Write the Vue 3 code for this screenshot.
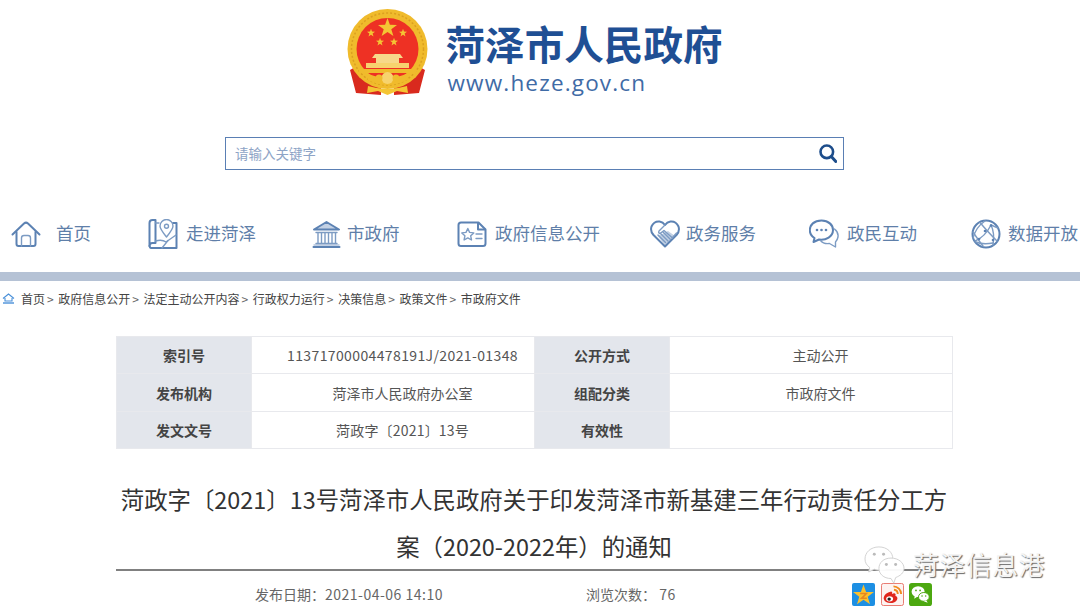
<script setup>
// five pointed star as a polygon point list
const star = (cx, cy, r) => {
  const pts = []
  for (let i = 0; i < 10; i++) {
    const rad = i % 2 ? r * 0.4 : r
    const a = -Math.PI / 2 + (i * Math.PI) / 5
    pts.push((cx + rad * Math.cos(a)).toFixed(1) + ',' + (cy + rad * Math.sin(a)).toFixed(1))
  }
  return pts.join(' ')
}

const smallStars = [[24, 25], [56, 25], [33, 34], [47, 34]]

const navs = [
  {
    name: '首页', gap: 15,
    lines: ['M1.5 15.5 L13 4.5 Q15 2.8 17 4.5 L28.5 15.5', 'M5.5 13 V25 Q5.5 27 7.5 27 H22.5 Q24.5 27 24.5 25 V13'],
    thin: ['M10.5 27 V19 Q10.5 16.5 13 16.5 H17 Q19.5 16.5 19.5 19 V27']
  },
  {
    name: '走进菏泽', gap: 8,
    lines: ['M1.5 4 Q1.5 1 4.5 1 H7.5 V24 H4.5 Q1.5 24 1.5 27 Z', 'M1.5 27 Q2 29.5 4.5 29 H28.5 V4 H25'],
    thin: ['M7.5 4 H11', 'M18.5 18 Q12 10 12 7 A6.5 6.5 0 0 1 25 7 Q25 10 18.5 18 Z', 'M18.5 9.2 A2 2 0 1 0 18.5 5.2 A2 2 0 1 0 18.5 9.2', 'M7.5 22 Q14 20 18 23 L28 16', 'M14 29 L20 21.5']
  },
  {
    name: '市政府', gap: 5,
    fills: ['M2 10.5 L14.5 3 L27 10.5 Z', 'M1.5 25 H27.5 V28.5 H1.5 Z'],
    lines: ['M2 10.5 L14.5 3 L27 10.5 Z', 'M1.5 28 H27.5'],
    thin: ['M4 13.5 H25', 'M4 24.5 H25', 'M6 14 V24', 'M9.5 14 V24', 'M13 14 V24', 'M16.5 14 V24', 'M20 14 V24', 'M23.5 14 V24']
  },
  {
    name: '政府信息公开', gap: 8,
    lines: ['M1.5 6 Q1.5 3.5 4 3.5 H21.5 L28.5 10.5 V24.5 Q28.5 27 26 27 H4 Q1.5 27 1.5 24.5 Z', 'M21 4 V10.5 H28'],
    thin: ['M10.8 9.5 L12.6 13.4 L16.8 13.9 L13.7 16.8 L14.5 21 L10.8 18.9 L7.1 21 L7.9 16.8 L4.8 13.9 L9 13.4 Z', 'M19 15 H25', 'M19 19.5 H25']
  },
  {
    name: '政务服务', gap: 6,
    fills: ['M8 17 L15 27 L25 17 L18 12 Z'],
    lines: ['M15 27.5 L3.5 16 Q0 12 1.5 7.5 Q4 2 9.5 2.5 Q13 3 15 6 Q17 3 20.5 2.5 Q26 2 28.5 7.5 Q30 12 26.5 16 Z'],
    thin: ['M15 6 L9 12 Q8 14 10 14.5 L14 11.5 L22.5 19', 'M8 16 L15.5 23.5', 'M10.5 14.5 L18 22', 'M13 13 L20.5 20.5', 'M22.5 18.5 L26.5 14']
  },
  {
    name: '政民互动', gap: 8,
    lines: ['M12.5 1.5 C5 1.5 .8 6 .8 11 C.8 14.5 3 17.5 5.5 19 L4.5 23 L10 20.5 C17 21.5 24 17.5 24 11 C24 6 19.5 1.5 12.5 1.5 Z'],
    thin: ['M25.5 10 C28 12 29.5 15 29 18 C28.5 20.5 27.5 22 26.5 23 L26.5 28 L20.5 24.5 C17 25 13.5 24 11.5 21.5'],
    dots: [[8, 11], [12.5, 11], [17, 11]]
  },
  {
    name: '数据开放', gap: 7,
    lines: ['M15 1.5 A13.5 13.5 0 1 0 15 28.5 A13.5 13.5 0 1 0 15 1.5'],
    thin: ['M2 19 Q5 8 14 2', 'M9 3.5 Q16 12 26 22', 'M4 22 Q14 18 20 6 L27 9', 'M20 6 Q24 14 22 26', 'M5 23 Q12 26 22 24', 'M2 13 Q8 22 12 27'],
    dots: [[14, 12], [20, 6.5], [8, 20], [22, 21]]
  }
]

const crumbs = ['首页', '政府信息公开', '法定主动公开内容', '行政权力运行', '决策信息', '政策文件', '市政府文件']

const rows = [
  ['索引号', '11371700004478191J/2021-01348', '公开方式', '主动公开'],
  ['发布机构', '菏泽市人民政府办公室', '组配分类', '市政府文件'],
  ['发文文号', '菏政字〔2021〕13号', '有效性', '']
]
</script>

<template>
  <div class="page">
    <header class="brand">
      <svg class="emblem" width="82" height="88" viewBox="0 0 82 88">
        <path d="M10 58 L3 62 L9 85 L34 87 V70 Z M71 58 L78 62 L72 85 L47 87 V70 Z" fill="#d92a1e" />
        <circle cx="40.5" cy="41" r="40" fill="#f0bb2c" />
        <circle cx="40.5" cy="41" r="36" fill="none" stroke="#dba020" stroke-width="1.5" stroke-dasharray="2 2" />
        <circle cx="40.5" cy="41" r="31" fill="#ee3124" />
        <polygon :points="star(40.5, 20, 10)" fill="#f4c534" />
        <polygon v-for="s in smallStars" :key="s[0]" :points="star(s[0], s[1], 4.2)" fill="#f4c534" />
        <path d="M28 46 H53 L56 50 H25 Z M29 50 H52 V55 H29 Z" fill="#f7d98a" />
        <path d="M19 55 H62 V60 H19 Z" fill="#f7d36e" />
        <path d="M12 61 H69 V65 H12 Z" fill="#f0bb2c" />
        <path d="M18 64 Q40 76 63 64 L60 72 Q40 82 21 72 Z" fill="#f0bb2c" />
        <circle cx="40.5" cy="70" r="6" fill="#f7d36e" />
        <circle cx="32" cy="70" r="3.5" fill="#f0bb2c" />
        <circle cx="49" cy="70" r="3.5" fill="#f0bb2c" />
        <path d="M21 78 Q40 84 60 78 L61 85 L50 83 L40.5 87 L31 83 L20 85 Z" fill="#f4c534" />
      </svg>
      <div class="brand-text">
        <div class="brand-title">菏泽市人民政府</div>
        <div class="brand-url">www.heze.gov.cn</div>
      </div>
    </header>

    <div class="search">
      <span class="placeholder">请输入关键字</span>
      <svg width="18" height="19" viewBox="0 0 18 19">
        <circle cx="7.8" cy="7.8" r="6.3" fill="none" stroke="#1d4d8b" stroke-width="2.6" />
        <path d="M12.3 12.5 L16.8 17.5" stroke="#1d4d8b" stroke-width="3" stroke-linecap="round" />
      </svg>
    </div>

    <nav class="nav">
      <a v-for="n in navs" :key="n.name" class="nav-item">
        <svg class="nav-icon" width="30" height="30" viewBox="0 0 30 30" fill="none" :style="{ marginRight: n.gap + 'px' }">
          <path v-for="d in n.fills" :key="d" :d="d" fill="#c3d1e4" />
          <path v-for="d in n.lines" :key="d" :d="d" stroke="#5c82b3" stroke-width="2" stroke-linejoin="round" stroke-linecap="round" />
          <path v-for="d in n.thin" :key="d" :d="d" stroke="#7c9bc3" stroke-width="1.4" stroke-linejoin="round" stroke-linecap="round" />
          <circle v-for="p in n.dots" :key="p[0]" :cx="p[0]" :cy="p[1]" r="1.3" fill="#5c82b3" />
        </svg>
        <span class="nav-label">{{ n.name }}</span>
      </a>
    </nav>

    <div class="band"></div>

    <div class="crumbs">
      <svg width="13" height="11" viewBox="0 0 13 11" fill="none">
        <path d="M1 5.5 L6.5 1 L12 5.5 M3 5 V8 H10 V5" stroke="#4a90d9" stroke-width="1.1" />
        <path d="M1 10 H12" stroke="#4a90d9" stroke-width="1.4" />
      </svg>
      <template v-for="(c, i) in crumbs" :key="c">
        <span class="crumb">{{ c }}</span>
        <span v-if="i < crumbs.length - 1" class="sep">&gt;</span>
      </template>
    </div>

    <main class="article">
      <table class="meta-table">
        <tbody>
          <tr v-for="(r, i) in rows" :key="r[0]">
            <th class="c1">{{ r[0] }}</th>
            <td class="c2" :class="{ code: i === 0, wide: i === 2 }">{{ r[1] }}</td>
            <th class="c3">{{ r[2] }}</th>
            <td class="c4">{{ r[3] }}</td>
          </tr>
        </tbody>
      </table>

      <h1 class="title">菏政字〔2021〕13号菏泽市人民政府关于印发菏泽市新基建三年行动责任分工方案（2020-2022年）的通知</h1>

      <div class="info">
        <span class="date">发布日期：<span class="num">2021-04-06 14:10</span></span>
        <span class="views">浏览次数： <span class="num">76</span></span>
        <div class="share">
          <svg width="23" height="23" viewBox="0 0 24 24">
            <rect width="24" height="24" rx="2" fill="#1d8fe3" />
            <polygon :points="star(12, 13, 11.5)" fill="#fbc02d" />
            <path d="M8.5 11 H15 L10 16 H15.5" fill="none" stroke="#e8871e" stroke-width="1.6" />
          </svg>
          <svg width="23" height="23" viewBox="0 0 24 24">
            <rect x=".5" y=".5" width="23" height="23" rx="2" fill="#fdf3f1" stroke="#e8746a" />
            <path d="M10 9 C5 10 2 14 3 17 C4 21 10 22 14 20 C18 18 18 14 15 13.5 C16 11 14 10 11.5 11.5 C12 9.5 11.5 8.8 10 9 Z" fill="#e0261c" />
            <ellipse cx="9" cy="16.5" rx="3.6" ry="2.8" fill="#fff" />
            <circle cx="8.5" cy="16.8" r="1.8" fill="#222" />
            <path d="M13 3.5 A8 8 0 0 1 21 11.5 M13.5 7 A4.5 4.5 0 0 1 17.5 11.5" fill="none" stroke="#f08a1d" stroke-width="2" />
          </svg>
          <svg width="23" height="23" viewBox="0 0 24 24">
            <rect width="24" height="24" rx="3" fill="#4ca810" />
            <ellipse cx="9.5" cy="9" rx="6.8" ry="5.6" fill="#fff" />
            <path d="M6 13 L5.5 16.5 L9 14 Z" fill="#fff" />
            <ellipse cx="15.5" cy="14.5" rx="5.6" ry="4.6" fill="#fff" stroke="#4ca810" />
            <path d="M18 18 L19.5 20.5 L15.5 19 Z" fill="#fff" />
            <circle cx="7.3" cy="7.8" r=".9" fill="#4ca810" />
            <circle cx="11.6" cy="7.8" r=".9" fill="#4ca810" />
            <circle cx="13.6" cy="13.6" r=".8" fill="#4ca810" />
            <circle cx="17.4" cy="13.6" r=".8" fill="#4ca810" />
          </svg>
        </div>
      </div>
    </main>

    <div class="watermark">
      <svg width="41" height="39" viewBox="0 0 44 42">
        <path d="M16 1 C7 1 1 7 1 14 C1 18 3 21 6 23 L5 28 L11 25 C13 26 15 26 17 26 C25 26 31 21 31 14 C31 7 25 1 16 1 Z" fill="#fff" fill-opacity=".92" stroke="#cfcfcf" />
        <path d="M29 13 C21 13 16 18 16 24 C16 30 21 35 29 35 L32 40 L34 34 C39 32 43 29 43 24 C43 18 37 13 29 13 Z" fill="#fff" fill-opacity=".95" stroke="#cfcfcf" />
        <circle cx="11" cy="9" r="1.6" fill="#bbb" />
        <circle cx="21" cy="9" r="1.6" fill="#bbb" />
        <circle cx="24" cy="20" r="1.6" fill="#bbb" />
        <circle cx="34" cy="20" r="1.6" fill="#bbb" />
      </svg>
      <span class="mark-text">菏泽信息港</span>
    </div>
  </div>
</template>

<style scoped>
.page {
  position: relative;
  width: 1080px;
  height: 613px;
  overflow: hidden;
  background: #fff;
  font-family: "Noto Sans CJK SC", "Liberation Sans", sans-serif;
  color: #444;
}

.brand {
  display: flex;
  height: 137px;
  padding: 8px 0 0 346.5px;
  box-sizing: border-box;
}
.emblem {
  flex: none;
}
.brand-text {
  margin-left: 17px;
  padding-top: 10px;
}
.brand-title {
  font-size: 39.6px;
  font-weight: 700;
  line-height: 50px;
  color: #1f4f94;
  white-space: nowrap;
}
.brand-url {
  margin-left: 2px;
  font-family: "Open Sans", "Liberation Sans", sans-serif;
  font-size: 22.5px;
  line-height: 30px;
  letter-spacing: 1.17px;
  color: #3f6ba6;
}

.search {
  display: flex;
  align-items: center;
  justify-content: space-between;
  width: 619px;
  height: 33px;
  margin-left: 225px;
  padding: 0 6px 0 9px;
  box-sizing: border-box;
  border: 1px solid #5a7fb4;
}
.placeholder {
  padding-bottom: 1px;
  font-size: 13.5px;
  color: #8ea4c6;
}

.nav {
  display: grid;
  grid-template-columns: 137px 164px 145px 193px 159px 162px 109px;
  height: 44px;
  margin-top: 42px;
  padding-left: 11px;
}
.nav-item {
  display: flex;
  align-items: center;
  font-size: 17.5px;
  color: #5f7fa9;
  white-space: nowrap;
}
.nav-icon {
  flex: none;
}
.nav-label {
  padding-bottom: 4px;
}

.band {
  height: 9px;
  margin-top: 16px;
  background: #b5c2d5;
}

.crumbs {
  display: flex;
  align-items: center;
  height: 37px;
  padding: 0 0 2px 2px;
  box-sizing: border-box;
  font-size: 12px;
  color: #444;
  white-space: nowrap;
}
.crumbs svg {
  margin-right: 6px;
}
.sep {
  margin: 0 4.6px 0 2px;
  color: #666;
}

.article {
  width: 836px;
  margin-left: 116px;
  margin-top: 18px;
}

.meta-table {
  width: 836px;
  table-layout: fixed;
  border-collapse: collapse;
  font-size: 14px;
}
.meta-table tr {
  height: 37.4px;
}
.meta-table th,
.meta-table td {
  padding: 0;
  border: 1px solid #e8e9ed;
  box-sizing: border-box;
  text-align: center;
}
.meta-table th {
  background: #e3e6ec;
  font-weight: 700;
  color: #444;
}
.meta-table td {
  padding-left: 19px;
  color: #555;
}
.c1,
.c3 {
  width: 135px;
}
.c2,
.c4 {
  width: 283px;
}
.meta-table .c2 {
  white-space: nowrap;
}
.meta-table .code {
  letter-spacing: .38px;
}
.meta-table .wide {
  letter-spacing: .2px;
}

.title {
  height: 93px;
  margin: 27px 0 0;
  border-bottom: 2px solid #808080;
  font-size: 23.4px;
  font-weight: 400;
  line-height: 47px;
  text-align: center;
  color: #333;
}

.info {
  display: flex;
  align-items: center;
  height: 46px;
  padding-left: 139px;
  font-size: 14px;
  color: #666;
  white-space: nowrap;
}
.num {
  letter-spacing: .5px;
}
.date {
  width: 331px;
}
.views {
  width: 266px;
}
.share {
  display: flex;
  gap: 5.5px;
}

.watermark {
  position: absolute;
  left: 864px;
  top: 545px;
  display: flex;
  align-items: center;
  gap: 8px;
  font-size: 25.8px;
  letter-spacing: .6px;
  color: #f4f4f4;
  text-shadow: 1px 1px 1px #666;
}
.mark-text {
  margin-bottom: 3px;
}
</style>
